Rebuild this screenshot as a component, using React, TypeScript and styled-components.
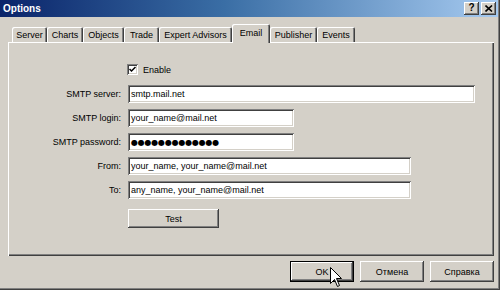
import React from "react";
import styled, { createGlobalStyle, css } from "styled-components";

const Global = createGlobalStyle`
  html, body { margin: 0; padding: 0; background: #d4d0c8; }
  body { font-family: "Liberation Sans", Arial, sans-serif; font-size: 9px; color: #000; }
  * { box-sizing: border-box; }
`;

const raised = css`
  box-shadow: inset -1px -1px #404040, inset 1px 1px #ffffff, inset -2px -2px #808080, inset 2px 2px #d4d0c8;
`;
const sunken = css`
  box-shadow: inset 1px 1px #808080, inset -1px -1px #ffffff, inset 2px 2px #404040, inset -2px -2px #d4d0c8;
`;

const Window = styled.div`
  position: relative;
  width: 500px;
  height: 290px;
  background: #d4d0c8;
  display: flex;
  flex-direction: column;
  box-shadow: inset -1px -1px #404040, inset -2px -2px #808080;
  overflow: hidden;
`;

const TitleBar = styled.div`
  height: 17px;
  margin-right: 2px;
  background: linear-gradient(to right, #0a246a 0%, #3a6ea5 45%, #a6caf0 100%);
  display: flex;
  align-items: center;
  justify-content: space-between;
  padding: 0 2px 0 3px;
`;

const Title = styled.span`
  color: #fff;
  font-weight: bold;
  font-size: 10px;
  font-family: "Liberation Sans", Arial, sans-serif;
`;

const TitleButtons = styled.div`
  display: flex;
  gap: 2px;
`;

const TitleButton = styled.div`
  width: 15px;
  height: 13px;
  background: #d4d0c8;
  ${raised};
  display: flex;
  align-items: center;
  justify-content: center;
  font-weight: bold;
  font-size: 10px;
  line-height: 1;
  padding-bottom: 1px;
`;

const TabStrip = styled.div`
  display: flex;
  align-items: flex-end;
  height: 18px;
  margin-top: 7px;
  padding-left: 12px;
`;

const Tab = styled.div<{ $w: number; $active?: boolean }>`
  width: ${(p) => p.$w}px;
  height: ${(p) => (p.$active ? 19 : 15)}px;
  display: flex;
  align-items: center;
  justify-content: center;
  padding-top: ${(p) => (p.$active ? 0 : 1)}px;
  background: #d4d0c8;
  border-radius: 2px 2px 0 0;
  box-shadow: inset 1px 1px #ffffff, inset -1px 0 #404040, inset -2px 0 #808080;
  ${(p) =>
    p.$active &&
    css`
      position: relative;
      z-index: 1;
      margin-bottom: -1px;
      padding-bottom: 2px;
    `}
`;

const Panel = styled.div`
  margin: 0 6px 0 8px;
  height: 214px;
  background: #d4d0c8;
  box-shadow: inset 1px 1px #ffffff, inset -1px -1px #404040, inset -2px -2px #808080;
  padding: 21px 0 0 1px;
`;

const Form = styled.div`
  display: flex;
  flex-direction: column;
  gap: 6px;
`;

const Row = styled.div<{ $h?: number; $mt?: number; $mb?: number }>`
  display: grid;
  grid-template-columns: 112px 1fr;
  column-gap: 7px;
  align-items: center;
  height: ${(p) => p.$h ?? 18}px;
  margin-top: ${(p) => p.$mt ?? 0}px;
  margin-bottom: ${(p) => p.$mb ?? 0}px;
`;

const Label = styled.span`
  text-align: right;
`;

const Field = styled.div<{ $w: number }>`
  width: ${(p) => p.$w}px;
  height: 18px;
  background: #fff;
  ${sunken};
  padding: 0 3px;
  display: flex;
  align-items: center;
  white-space: nowrap;
  overflow: hidden;
`;

const Dots = styled.span`
  font-size: 8px;
  letter-spacing: -0.2px;
  font-family: "DejaVu Sans", sans-serif;
`;

const CheckWrap = styled.div`
  display: flex;
  align-items: center;
  gap: 5px;
  margin-left: -1px;
`;

const CheckBox = styled.div`
  width: 11px;
  height: 11px;
  background: #fff;
  ${sunken};
  display: flex;
  align-items: center;
  justify-content: center;
`;

const Button = styled.div<{ $w: number; $h: number; $default?: boolean }>`
  width: ${(p) => p.$w}px;
  height: ${(p) => p.$h}px;
  background: #d4d0c8;
  display: flex;
  align-items: center;
  justify-content: center;
  ${raised};
  ${(p) =>
    p.$default &&
    css`
      border: 1px solid #000;
    `}
`;

const Footer = styled.div`
  display: flex;
  justify-content: flex-end;
  gap: 6px;
  margin-top: 5px;
  padding-right: 6px;
`;

const Cursor = styled.svg`
  position: absolute;
  left: 330px;
  top: 267px;
`;

const tabs: [string, number][] = [
  ["Server", 35],
  ["Charts", 36],
  ["Objects", 41],
  ["Trade", 35],
  ["Expert Advisors", 73],
  ["Email", 38],
  ["Publisher", 47],
  ["Events", 38],
];

export default function App() {
  return (
    <>
      <Global />
      <Window>
        <TitleBar>
          <Title>Options</Title>
          <TitleButtons>
            <TitleButton>?</TitleButton>
            <TitleButton>
              <svg width="8" height="7" viewBox="0 0 8 7">
                <path d="M0.5 0.5 L7 6.5 M7 0.5 L0.5 6.5" stroke="#000" strokeWidth="1.6" />
              </svg>
            </TitleButton>
          </TitleButtons>
        </TitleBar>
        <TabStrip>
          {tabs.map(([t, w]) => (
            <Tab key={t} $w={w} $active={t === "Email"}>
              {t}
            </Tab>
          ))}
        </TabStrip>
        <Panel>
          <Form>
            <Row $h={13} $mb={3}>
              <span />
              <CheckWrap>
                <CheckBox>
                  <svg width="7" height="7" viewBox="0 0 7 7">
                    <path d="M0.5 3 L2.5 5 L6.5 1" fill="none" stroke="#000" strokeWidth="1.5" />
                  </svg>
                </CheckBox>
                <span>Enable</span>
              </CheckWrap>
            </Row>
            <Row>
              <Label>SMTP server:</Label>
              <Field $w={347}>smtp.mail.net</Field>
            </Row>
            <Row>
              <Label>SMTP login:</Label>
              <Field $w={166}>your_name@mail.net</Field>
            </Row>
            <Row>
              <Label>SMTP password:</Label>
              <Field $w={166}>
                <Dots>●●●●●●●●●●●●●</Dots>
              </Field>
            </Row>
            <Row>
              <Label>From:</Label>
              <Field $w={283}>your_name, your_name@mail.net</Field>
            </Row>
            <Row>
              <Label>To:</Label>
              <Field $w={283}>any_name, your_name@mail.net</Field>
            </Row>
            <Row $h={19} $mt={4}>
              <span />
              <Button $w={91} $h={19}>Test</Button>
            </Row>
          </Form>
        </Panel>
        <Footer>
          <Button $w={64} $h={21} $default>OK</Button>
          <Button $w={64} $h={21}>Отмена</Button>
          <Button $w={64} $h={21}>Справка</Button>
        </Footer>
        <Cursor width="13" height="21" viewBox="0 0 13 21">
          <path d="M0.5 0.5 L0.5 16.5 L4.5 12.5 L7.5 19.5 L9.5 18.5 L6.5 11.5 L11.5 11.5 Z" fill="#fff" stroke="#000" strokeWidth="1" />
        </Cursor>
      </Window>
    </>
  );
}
